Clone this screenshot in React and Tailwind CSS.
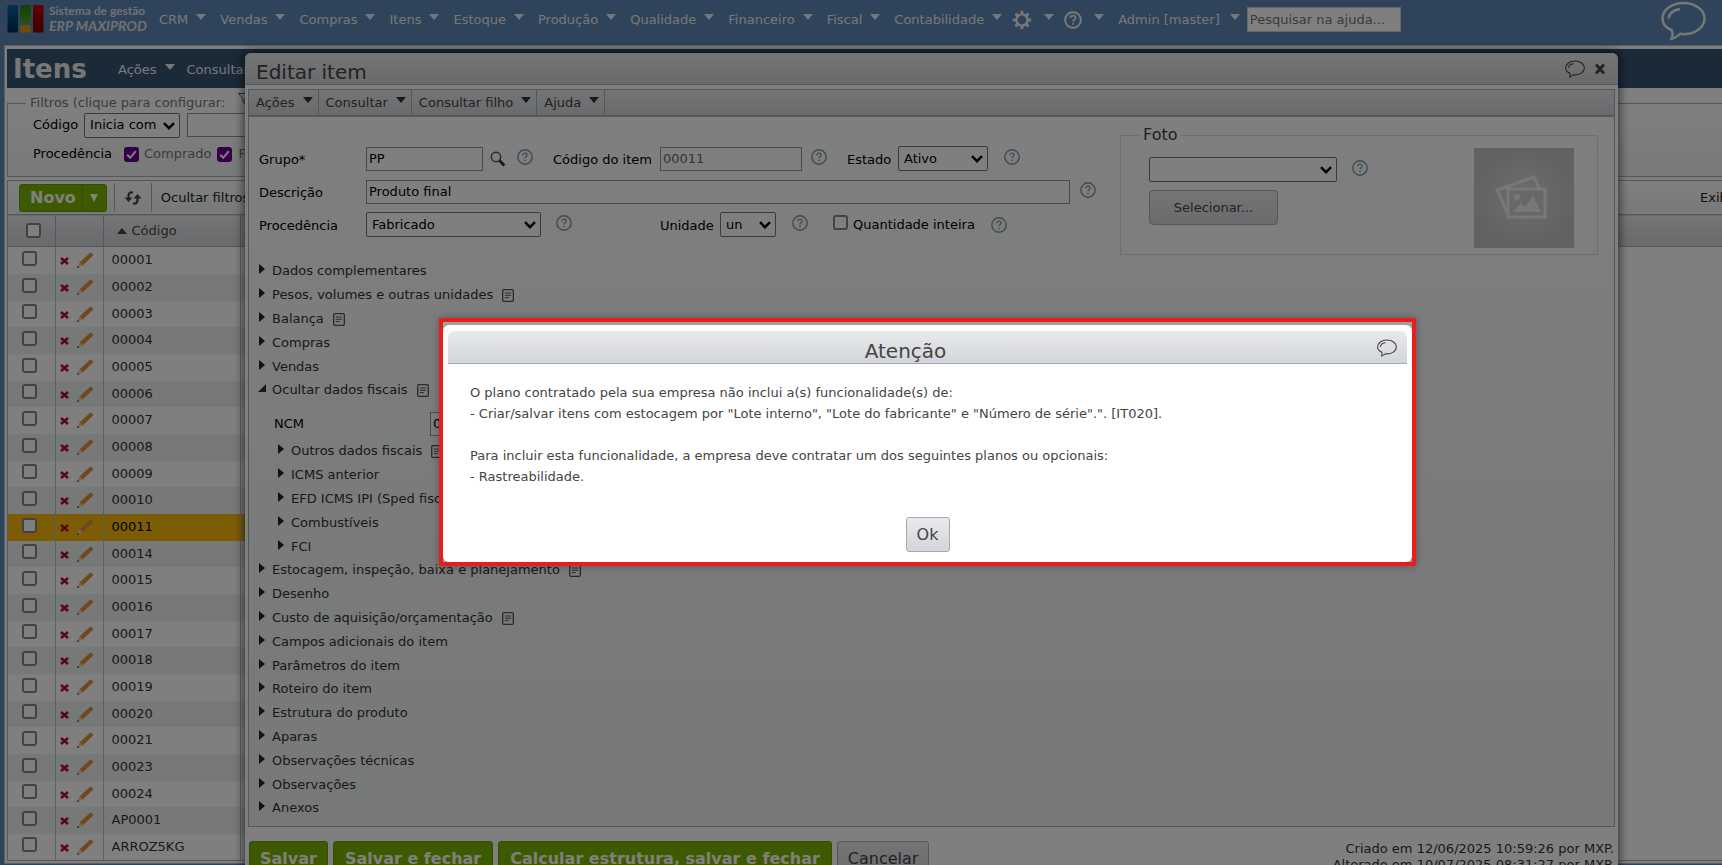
import { useState } from "react";

const menuItems = ["CRM", "Vendas", "Compras", "Itens", "Estoque", "Produção", "Qualidade", "Financeiro", "Fiscal", "Contabilidade"];

const codes = [
    "00001", "00002", "00003", "00004", "00005", "00006", "00007", "00008",
    "00009", "00010", "00011", "00014", "00015", "00016", "00017", "00018",
    "00019", "00020", "00021", "00023", "00024", "AP0001", "ARROZ5KG",
];

const sectionsBefore = [
    { label: "Dados complementares" },
    { label: "Pesos, volumes e outras unidades", note: true },
    { label: "Balança", note: true },
    { label: "Compras" },
    { label: "Vendas" },
    { label: "Ocultar dados fiscais", note: true, open: true },
];

const fiscalSections = [
    { label: "Outros dados fiscais", note: true },
    { label: "ICMS anterior" },
    { label: "EFD ICMS IPI (Sped fiscal)" },
    { label: "Combustíveis" },
    { label: "FCI" },
];

const sectionsAfter = [
    { label: "Estocagem, inspeção, baixa e planejamento", note: true },
    { label: "Desenho" },
    { label: "Custo de aquisição/orçamentação", note: true },
    { label: "Campos adicionais do item" },
    { label: "Parâmetros do item" },
    { label: "Roteiro do item" },
    { label: "Estrutura do produto" },
    { label: "Aparas" },
    { label: "Observações técnicas" },
    { label: "Observações" },
    { label: "Anexos" },
];

const Caret = ({ className = "" }) => (
    <svg viewBox="0 0 10 6" className={`w-[10px] h-[6px] shrink-0 ${className}`} fill="currentColor" aria-hidden="true">
        <path d="M0 0h10L5 6z" />
    </svg>
);

const Help = ({ className = "" }) => (
    <button type="button" aria-label="Ajuda" className={`w-4 h-4 shrink-0 text-[#7d97aa] ${className}`}>
        <svg viewBox="0 0 16 16" fill="none" stroke="currentColor" className="w-4 h-4">
            <circle cx="8" cy="8" r="7.2" strokeWidth="1.4" />
            <path d="M5.9 6.3c0-1.3.9-2.1 2.1-2.1s2.1.8 2.1 1.9c0 1.5-2.1 1.6-2.1 3.2" strokeWidth="1.3" />
            <path d="M8 10.8v1.4" strokeWidth="1.4" />
        </svg>
    </button>
);

const Bubble = ({ className }) => (
    <svg viewBox="0 0 46 40" fill="none" stroke="currentColor" strokeLinecap="round" strokeLinejoin="round" className={className} aria-hidden="true">
        <path d="M11 29.500C5 27 1.500 22.500 1.500 17.500 1.500 8.700 11 1.500 23 1.500s21.500 7.200 21.500 16S35 33.500 24 33.500c-1.500 0-3-.1-4.500-.4-2.500 2.400-5.500 4.400-9 5.400 1.500-3 1.800-6 .5-9z" />
        <path d="M8 16.500C9 12 13 8.800 18.500 8" />
    </svg>
);

const Gear = () => (
    <svg viewBox="0 0 20 20" className="w-5 h-5" fill="none" stroke="currentColor" aria-hidden="true">
        <circle cx="10" cy="10" r="5.600" strokeWidth="2.400" />
        <path d="M10 .8v3.400M10 15.800v3.400M.8 10h3.400M15.800 10h3.400M3.500 3.500l2.400 2.400M14.100 14.100l2.400 2.400M3.500 16.500l2.400-2.400M14.100 5.900l2.400-2.400" strokeWidth="2.800" />
    </svg>
);

const Note = () => (
    <svg viewBox="0 0 12 13" className="w-3 h-[13px] shrink-0 ml-[9px] text-[#555]" fill="none" stroke="currentColor" aria-hidden="true">
        <rect x=".7" y=".7" width="10.600" height="11.600" rx="1" strokeWidth="1.300" />
        <path d="M2.800 4h6.400M2.800 6.300h6.400M2.800 8.600h4" />
    </svg>
);

const Select = ({ id, label, value, className = "" }) => (
    <span className={`relative inline-block shrink-0 ${className}`}>
        <select id={id} aria-label={label} defaultValue={value} className="appearance-none w-full h-[25px] pl-[5px] bg-white border border-[#767676] rounded-[2px] text-black">
            <option value={value}>{value}</option>
        </select>
        <svg viewBox="0 0 12 8" className="absolute right-[5px] top-[9px] w-3 h-2 pointer-events-none" fill="none" stroke="#000" strokeWidth="2.400" aria-hidden="true">
            <path d="M1 1.200l5 5 5-5" />
        </svg>
    </span>
);

const Check = ({ id, label, checked = false }) => (
    <span className="relative inline-block w-[15px] h-[15px] shrink-0">
        <input
            id={id}
            type="checkbox"
            aria-label={label}
            defaultChecked={checked}
            className="peer block appearance-none w-[15px] h-[15px] bg-white border-2 border-[#858585] rounded-[3px] checked:bg-[#6d0090] checked:border-[#6d0090]"
        />
        <svg viewBox="0 0 15 15" className="absolute inset-0 hidden peer-checked:block pointer-events-none" fill="none" stroke="#fff" strokeWidth="2" aria-hidden="true">
            <path d="M3.200 7.800l3 3 5.600-6.600" />
        </svg>
    </span>
);

const inputClass = "h-6 px-[2px] bg-white border border-[#949494] text-black placeholder:text-[#757575]";

const Section = ({ label, note, open }) => (
    <li className="h-6 nth-[5n]:h-[23px] flex items-center">
        <button type="button" aria-expanded={!!open} className="flex items-center text-[#333]">
            <span className="w-[13px] shrink-0 flex mb-1">
                {open ? (
                    <svg viewBox="0 0 8 8" className="w-2 h-2 -ml-px" fill="#333"><path d="M8 0v8H0z" /></svg>
                ) : (
                    <svg viewBox="0 0 6 10" className="w-[6px] h-[10px]" fill="#222"><path d="M0 0l6 5-6 5z" /></svg>
                )}
            </span>
            {label}
            {note && <Note />}
        </button>
    </li>
);

const TopBar = () => (
    <header className="h-[45px] flex items-start text-[#eee]">
        <div className="flex items-start pl-[7px] pt-[5px] w-[159px] shrink-0">
            <svg viewBox="0 0 37 28" className="w-[37px] h-7" aria-hidden="true">
                <defs>
                    <linearGradient id="lb" x2="0" y2="1"><stop stopColor="#0a62a8" /><stop offset="1" stopColor="#00284f" /></linearGradient>
                    <linearGradient id="lg" x2="0" y2="1"><stop stopColor="#2f7d0b" /><stop offset="1" stopColor="#4fa818" /></linearGradient>
                    <linearGradient id="lr" x2="0" y2="1"><stop stopColor="#c40000" /><stop offset="1" stopColor="#7d0000" /></linearGradient>
                </defs>
                <rect x=".5" width="10.500" height="27.500" rx="1.500" fill="url(#lb)" />
                <rect x="13" width="11" height="17.500" rx="1.500" fill="url(#lg)" />
                <rect x="13" y="20" width="11" height="7.500" rx="1.500" fill="#d99a10" />
                <rect x="26" width="10.500" height="27.500" rx="1.500" fill="url(#lr)" />
            </svg>
            <div className="ml-[5px] font-['Lato',sans-serif] font-bold text-[#dfe3e8] whitespace-nowrap">
                <div className="text-[12px] leading-[11px]">Sistema de gestão</div>
                <div className="text-[14px] leading-[19px] italic">ERP MAXIPROD</div>
            </div>
        </div>
        <nav className="flex items-center h-[39px] shrink-0">
            {menuItems.map((item) => (
                <a key={item} href="#" className="flex items-center mr-[14px]">
                    {item}
                    <Caret className="ml-2 mb-[5px]" />
                </a>
            ))}
            <a href="#" aria-label="Configurações" className="flex items-center -ml-1 mr-[10px]">
                <Gear />
                <Caret className="ml-3 mb-[5px]" />
            </a>
            <a href="#" aria-label="Ajuda" className="flex items-center mr-[14px]">
                <svg viewBox="0 0 16 16" fill="none" stroke="currentColor" className="w-[18px] h-[18px]">
                    <circle cx="8" cy="8" r="7" strokeWidth="1.800" />
                    <path d="M5.700 6.300c0-1.400 1-2.200 2.300-2.200s2.300.8 2.300 2c0 1.500-2.300 1.700-2.300 3.200M8 10.600v1.600" strokeWidth="1.600" />
                </svg>
                <Caret className="ml-3 mb-[5px]" />
            </a>
            <a href="#" className="flex items-center">
                Admin [master]
                <Caret className="ml-[10px] mb-[5px]" />
            </a>
            <input aria-label="Pesquisar na ajuda" placeholder="Pesquisar na ajuda..." className="ml-[7px] w-[154px] h-[25px] px-[2px] bg-white border border-[#ccc] placeholder:text-[#757575]" />
        </nav>
        <button type="button" aria-label="Chat" className="ml-auto mr-4 mt-[1px]">
            <Bubble className="w-[45px] h-10 [stroke-width:2.600]" />
        </button>
    </header>
);

const ItemRow = ({ code }) => {
    const active = code === "00011";
    return (
        <tr className={active ? "h-[27px] nth-[3n]:h-[26px] bg-[#fab80c]" : "h-[27px] nth-[3n]:h-[26px] even:bg-[#eef0f0]"}>
            <td className="border-r border-[#bcbfc4] pl-[14px]">
                <div className="flex items-center pb-1"><Check id={`row-${code}`} label={`Selecionar ${code}`} /></div>
            </td>
            <td className="border-r border-[#bcbfc4]">
                <div className="flex items-center pl-1">
                    <button type="button" aria-label="Excluir">
                        <svg viewBox="0 0 9 8" className="w-[9px] h-2 mt-[2px]" stroke="#b8101c" strokeWidth="2.600"><path d="M1 1l7 6M8 1L1 7" /></svg>
                    </button>
                    <button type="button" aria-label="Editar" className="ml-2">
                        <svg viewBox="0 0 17 16" className="w-[17px] h-4">
                            <path d="M2.500 10.500L12.700 1c1.200-1 4 .8 3.300 2.500L5.800 13.500z" fill="#e0913c" />
                            <path d="M2.500 10.500l3.300 3L0 16z" fill="#e8cfae" />
                            <path d="M0 16l.8-2 1.500 1.200z" fill="#333" />
                        </svg>
                    </button>
                </div>
            </td>
            <td className={active ? "pl-2 text-black" : "pl-2 text-[#333]"}>{code}</td>
            <td className="border-l border-[#bcbfc4]" />
            <td className="bg-white" />
        </tr>
    );
};

const ItemsPage = () => (
    <main className="ml-1 border border-r-0 border-[#b8bcc2] bg-white pl-[2px] pt-[3px] pb-[2px]">
        <div className="h-[39px] bg-[#365470] flex items-center text-[#eee]">
            <h1 className="w-[111px] pl-[6px] text-[26px] leading-[32px] font-bold">Itens</h1>
            <a href="#" className="flex items-center mr-3 pt-[2px]">Ações<Caret className="ml-2 mb-[5px]" /></a>
            <a href="#" className="flex items-center pt-[2px]">Consultar<Caret className="ml-2 mb-[5px]" /></a>
        </div>
        <fieldset className="mt-[5px] h-[84px] border border-r-0 border-[#a9aeb8] bg-linear-to-b from-white to-[#f0f2f2]">
            <legend className="ml-[18px] px-1 flex items-center leading-[18px] text-[#777]">
                Filtros (clique para configurar:
                <svg viewBox="0 0 12 12" className="w-3 h-3 ml-[13px] mb-2" fill="none" stroke="#555"><path d="M.5.5h11L7 6v5L5 9V6z" /></svg>
            </legend>
            <div className="pl-[25px] -mt-px flex items-center h-[26px]">
                <label htmlFor="filtro-codigo">Código</label>
                <Select id="filtro-codigo" value="Inicia com" className="w-[96px] ml-[6px]" />
                <input aria-label="Código" className={`ml-[7px] w-[150px] ${inputClass}`} />
            </div>
            <div className="pl-[25px] mt-[3px] flex items-center h-[26px] text-[#777]">
                <span className="w-[91px] text-black">Procedência</span>
                <Check id="comprado" checked />
                <label htmlFor="comprado" className="ml-[5px] mr-[6px]">Comprado</label>
                <Check id="fabricado" checked />
                <label htmlFor="fabricado" className="ml-[6px]">Fabricado</label>
            </div>
        </fieldset>
        <div className="mt-[3px] border-l border-[#a9aeb8]">
            <div className="h-[34px] border-t border-[#a9aeb8] bg-linear-to-b from-white to-[#f0f2f2] flex items-center">
                <div className="ml-[11px] h-7 flex items-center rounded-[3px] bg-[#7cb500] border border-[#6a9c00] text-white">
                    <button type="button" className="pl-[10px] pr-[6px] text-[16px] leading-[24px] font-bold">Novo</button>
                    <button type="button" className="w-6 h-full border-l border-[#6a9c00] flex items-center justify-center" aria-label="Mais opções">
                        <svg viewBox="0 0 8 8" className="w-2 h-2" fill="#fff"><path d="M0 0h8L4 8z" /></svg>
                    </button>
                </div>
                <button type="button" aria-label="Atualizar" className="ml-[7px] w-[38px] h-[29px] border-x border-[#a9aeb8] flex items-center justify-center">
                    <svg viewBox="0 0 18 14" className="w-[18px] h-[14px]" fill="none" stroke="#444" strokeWidth="2.200">
                        <path d="M9 1.500C5.500 1 4.500 2.500 4.500 5v3M9 12.500c3.500.5 4.500-1 4.500-3.500V6" />
                        <path d="M.5 6.500h8l-4 4.500zM9.500 7.500h8l-4-4.500z" fill="#444" stroke="none" />
                    </svg>
                </button>
                <button type="button" className="ml-[9px] text-[#222]">Ocultar filtros</button>
                <span className="ml-auto w-[22px] overflow-hidden whitespace-nowrap text-[#222]">Exibir</span>
            </div>
            <table className="w-full table-fixed border-collapse">
                <colgroup>
                    <col className="w-[47px]" />
                    <col className="w-[48px]" />
                    <col className="w-[137px]" />
                    <col className="w-[1200px]" />
                    <col />
                </colgroup>
                <thead>
                    <tr className="h-8 bg-linear-to-b from-[#e9eaec] to-[#d2d5d9] border-y border-[#a9aeb8]">
                        <th className="border-r border-[#a9aeb8] pl-[18px]"><div className="flex"><Check id="todos" label="Selecionar todos" /></div></th>
                        <th className="border-r border-[#a9aeb8]" aria-label="Operações" />
                        <th className="pl-[13px] font-normal text-left text-[#444]">
                            <span className="flex items-center gap-[5px]"><Caret className="rotate-180" />Código</span>
                        </th>
                        <th colSpan={2} className="border-l border-[#a9aeb8]" aria-label="Descrição" />
                    </tr>
                </thead>
                <tbody className="border-b border-[#a9aeb8]">
                    {codes.map((code) => <ItemRow key={code} code={code} />)}
                </tbody>
            </table>
        </div>
    </main>
);

const Editor = () => (
    <section aria-label="Editar item" className="absolute left-[245px] right-[104px] top-[53px] bg-white rounded-t-[6px] shadow-[0_0_10px_2px_rgba(0,0,0,0.55)] pb-6">
        <div className="h-8 pl-[11px] pr-[13px] flex items-center rounded-t-[6px] border-b border-[#a9aeb8] bg-linear-to-b from-[#e9eaec] to-[#d2d5d9] text-[#444]">
            <h2 className="text-[20px] leading-[24px] pt-[6px]">Editar item</h2>
            <button type="button" aria-label="Chat" className="ml-auto"><Bubble className="w-5 h-[18px] [stroke-width:2.600]" /></button>
            <button type="button" aria-label="Fechar" className="ml-[10px]">
                <svg viewBox="0 0 10 10" className="w-[10px] h-[10px]" stroke="#444" strokeWidth="2.800"><path d="M1 .5l8 9M9 .5l-8 9" /></svg>
            </button>
        </div>
        <div className="mx-[3px] mt-1 border border-[#a9aeb8] bg-linear-to-b from-white to-[#eef0f0]">
            <nav className="h-[27px] flex border-b-2 border-[#a9aeb8] bg-linear-to-b from-[#e9eaec] to-[#d2d5d9] text-[#444]">
                {["Ações", "Consultar", "Consultar filho", "Ajuda"].map((item) => (
                    <button key={item} type="button" className="flex items-center pl-[7px] pr-[5px] border-r border-[#a9aeb8]">
                        {item}
                        <Caret className="ml-2 mb-[5px] text-[#333]" />
                    </button>
                ))}
            </nav>
            <div className="flex items-start">
                <div className="flex-1 pl-[10px] pt-[25px]">
                    <div className="h-[33px] flex items-center">
                        <label htmlFor="grupo" className="w-[107px] pt-[3px]">Grupo*</label>
                        <input id="grupo" defaultValue="PP" className={`w-[117px] ${inputClass}`} />
                        <button type="button" aria-label="Pesquisar grupo" className="ml-[7px] w-4 h-4">
                            <svg viewBox="0 0 16 16" fill="none" stroke="#555"><circle cx="6" cy="6" r="4.700" strokeWidth="1.500" /><path d="M9.500 9.500l4.800 5" stroke="#333" strokeWidth="2.800" /></svg>
                        </button>
                        <Help className="ml-[11px] mb-1" />
                        <label htmlFor="codigo" className="ml-[20px] w-[107px] pt-[3px]">Código do item</label>
                        <input id="codigo" defaultValue="00011" readOnly className="w-[142px] h-6 px-[2px] border border-[#949494] text-[#666]" />
                        <Help className="ml-[9px] mb-1" />
                        <label htmlFor="estado" className="ml-[20px] w-[51px] pt-[3px]">Estado</label>
                        <Select id="estado" value="Ativo" className="w-[90px]" />
                        <Help className="ml-4 mb-1" />
                    </div>
                    <div className="h-[33px] flex items-center">
                        <label htmlFor="descricao" className="w-[107px] pt-[3px]">Descrição</label>
                        <input id="descricao" defaultValue="Produto final" className={`w-[704px] ${inputClass}`} />
                        <Help className="ml-[10px] mb-1" />
                    </div>
                    <div className="h-[33px] flex items-center">
                        <label htmlFor="procedencia" className="w-[107px] pt-[3px]">Procedência</label>
                        <Select id="procedencia" value="Fabricado" className="w-[175px]" />
                        <Help className="ml-[15px] mb-1" />
                        <label htmlFor="unidade" className="ml-[88px] w-[60px] pt-[3px]">Unidade</label>
                        <Select id="unidade" value="un" className="w-14" />
                        <Help className="ml-4 mb-1" />
                        <span className="ml-[25px] mb-1 flex"><Check id="inteira" /></span>
                        <label htmlFor="inteira" className="ml-[5px]">Quantidade inteira</label>
                        <Help className="ml-4" />
                    </div>
                </div>
                <fieldset className="w-[478px] h-[130px] mr-4 mt-2 border border-[#dcdcdc] flex">
                    <legend className="ml-[18px] px-1 text-[16px] leading-[20px] text-[#444]">Foto</legend>
                    <div className="flex items-start pl-[28px] pr-[22px] pt-[3px]">
                        <div className="pt-[9px]">
                            <div className="flex items-center">
                                <Select id="foto" label="Foto" value="" className="w-[188px]" />
                                <Help className="ml-[15px] mb-1" />
                            </div>
                            <button type="button" className="mt-2 w-[129px] h-[35px] rounded-[4px] border border-[#a9aeb8] bg-linear-to-b from-[#e9eaec] to-[#d2d5d9] text-[#444]">Selecionar...</button>
                        </div>
                        <svg viewBox="0 0 100 100" className="w-[100px] h-[100px] ml-[106px] shrink-0" role="img" aria-label="Sem foto">
                            <defs><radialGradient id="ph"><stop stopColor="#dcdcdc" /><stop offset="1" stopColor="#c4c4c4" /></radialGradient></defs>
                            <rect width="100" height="100" fill="url(#ph)" />
                            <path d="M35 68L23 42l37-13 6 13" fill="none" stroke="#f0f0f0" strokeWidth="3" />
                            <rect x="34" y="41" width="37" height="28" fill="#d0d0d0" stroke="#f0f0f0" strokeWidth="3" />
                            <circle cx="43" cy="49" r="3" fill="#f0f0f0" />
                            <path d="M39 64l8-9 4 4 8-11 8 16z" fill="#f0f0f0" />
                        </svg>
                    </div>
                </fieldset>
            </div>
            <div className="pl-[10px] pt-1 pb-[6px]">
                <ul>{sectionsBefore.map((s) => <Section key={s.label} {...s} />)}</ul>
                <div className="h-[37px] pl-[15px] pt-[6px] flex items-center">
                    <label htmlFor="ncm" className="w-[156px]">NCM</label>
                    <input id="ncm" defaultValue="00000000" className={`w-[120px] ${inputClass}`} />
                </div>
                <ul className="pl-[19px]">{fiscalSections.map((s) => <Section key={s.label} {...s} />)}</ul>
                <ul>{sectionsAfter.map((s) => <Section key={s.label} {...s} />)}</ul>
            </div>
        </div>
        <footer className="mx-1 mt-[14px] flex items-start gap-[5px] text-[16px] leading-[20px]">
            <button type="button" className="h-9 px-[10px] rounded-[3px] bg-[#7cb500] border border-[#6a9c00] text-white font-bold">Salvar</button>
            <button type="button" className="h-9 px-[11px] rounded-[3px] bg-[#7cb500] border border-[#6a9c00] text-white font-bold">Salvar e fechar</button>
            <button type="button" className="h-9 px-[11px] rounded-[3px] bg-[#7cb500] border border-[#6a9c00] text-white font-bold">Calcular estrutura, salvar e fechar</button>
            <button type="button" className="h-9 px-[10px] rounded-[3px] border border-[#a9aeb8] bg-linear-to-b from-[#e9eaec] to-[#d2d5d9] text-[#444]">Cancelar</button>
            <p className="ml-auto text-right text-[13px] leading-[16px] text-[#333]">
                Criado em 12/06/2025 10:59:26 por MXP.<br />
                Alterado em 10/07/2025 08:31:27 por MXP.
            </p>
        </footer>
    </section>
);

const Alert = ({ onClose }) => (
    <div className="absolute left-[439px] right-[306px] top-[318px] border-4 border-[#e81e1e] bg-[#a0a0a3] pt-[3px] shadow-[0_0_8px_rgba(0,0,0,0.3)]">
        <div role="alertdialog" aria-labelledby="alerta" className="bg-white rounded-[6px] p-[5px] pt-[6px] pb-[10px]">
            <div className="h-[33px] relative flex items-center justify-center pr-[44px] rounded-t-[6px] border-b border-[#a3a8b3] bg-linear-to-b from-[#e9eaec] to-[#d2d5d9] text-[#444]">
                <h2 id="alerta" className="pt-2 text-[20px] leading-[24px]">Atenção</h2>
                <button type="button" aria-label="Chat" className="absolute right-[10px] top-2"><Bubble className="w-5 h-[18px] [stroke-width:2.600]" /></button>
            </div>
            <div className="pl-[22px] pt-[18px] leading-[21px] text-[#444]">
                <p>O plano contratado pela sua empresa não inclui a(s) funcionalidade(s) de:</p>
                <p>- Criar/salvar itens com estocagem por "Lote interno", "Lote do fabricante" e "Número de série".". [IT020].</p>
                <p className="mt-[21px]">Para incluir esta funcionalidade, a empresa deve contratar um dos seguintes planos ou opcionais:</p>
                <p>- Rastreabilidade.</p>
            </div>
            <div className="mt-[30px] flex justify-center">
                <button type="button" onClick={onClose} className="w-11 h-[35px] rounded-[3px] border border-[#a3a8b3] bg-linear-to-b from-[#e9eaec] to-[#d2d5d9] text-[16px] text-[#444]">Ok</button>
            </div>
        </div>
    </div>
);

export default function App() {
    const [alertOpen, setAlertOpen] = useState(true);

    return (
        <div className="relative h-screen overflow-hidden bg-[#5e86b6] font-['DejaVu_Sans',Verdana,sans-serif] text-[13px] leading-[18px] text-black">
            <TopBar />
            <ItemsPage />
            <Editor />
            {alertOpen && (
                <>
                    <div className="absolute inset-0 bg-black/50" />
                    <Alert onClose={() => setAlertOpen(false)} />
                </>
            )}
        </div>
    );
}
